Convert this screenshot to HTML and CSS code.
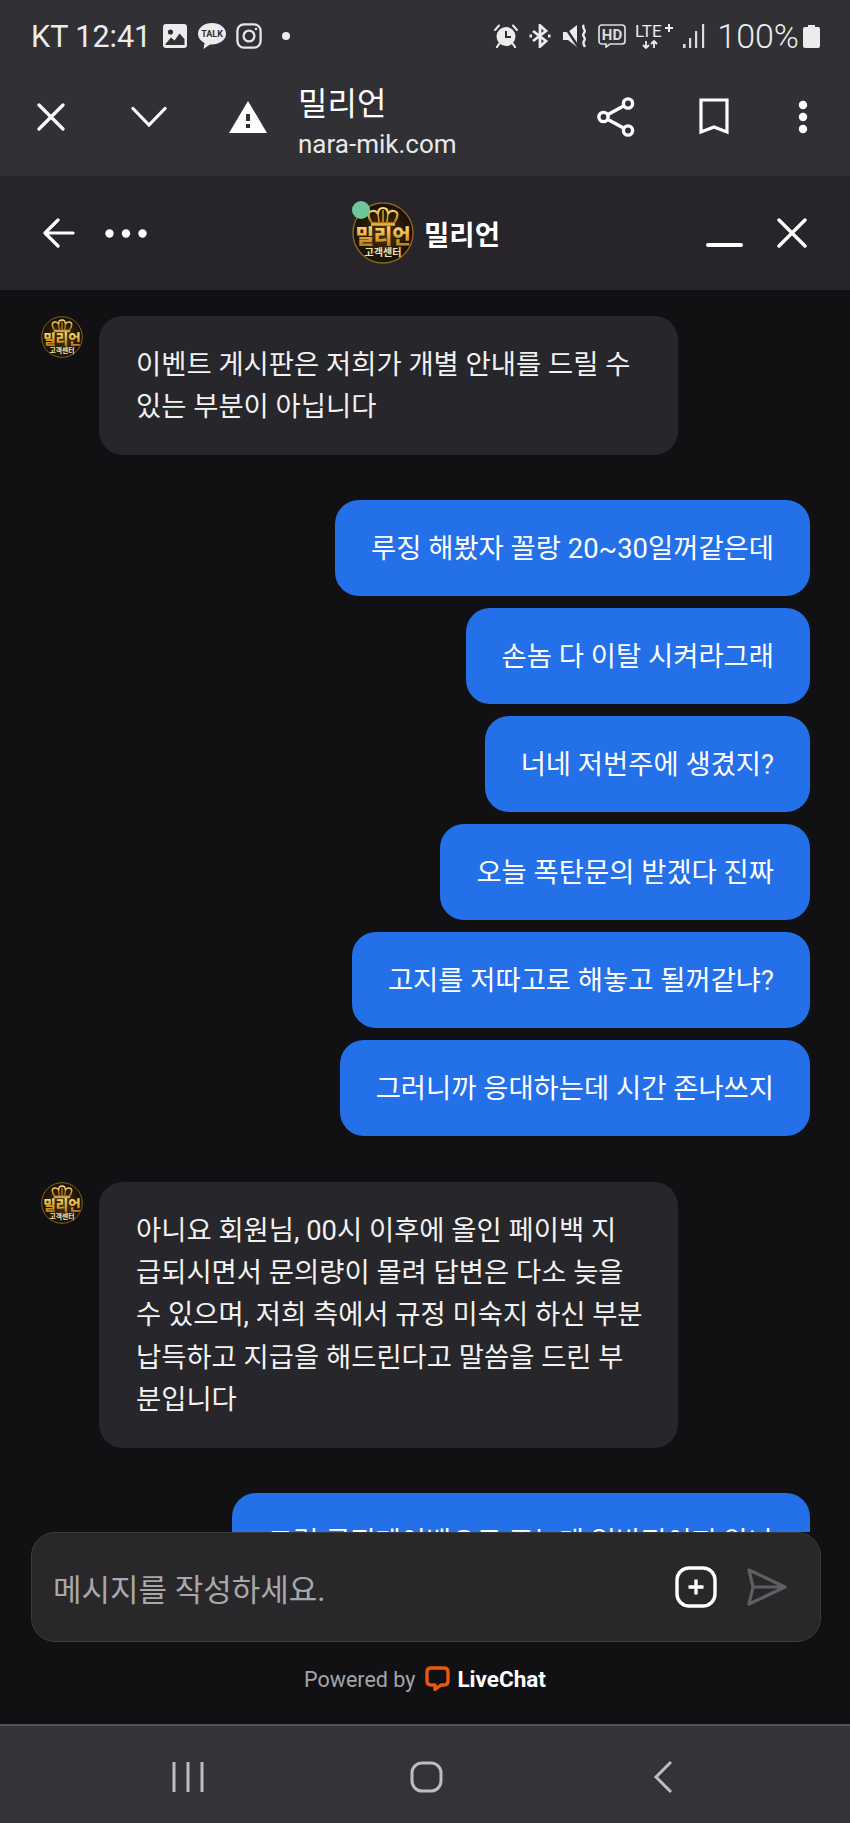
FILE: index.html
```html
<!DOCTYPE html>
<html lang="ko">
<head>
    <meta charset="UTF-8">
    <meta name="viewport" content="width=device-width, initial-scale=1.0">
    <title>밀리언</title>
    <link rel="stylesheet" href="styles.css">
</head>
<body>
    <svg class="defs" width="0" height="0">
        <defs>
            <linearGradient id="gold" x1="0" y1="0" x2="0" y2="1">
                <stop offset="0" stop-color="#fbe08a"/>
                <stop offset="0.55" stop-color="#d9a02f"/>
                <stop offset="1" stop-color="#a86f14"/>
            </linearGradient>
            <radialGradient id="disc" cx="0.5" cy="0.5" r="0.55">
                <stop offset="0" stop-color="#4a3208"/>
                <stop offset="1" stop-color="#120c04"/>
            </radialGradient>
            <symbol id="logo" viewBox="0 0 62 62">
                <circle cx="31" cy="31" r="30" fill="url(#disc)" stroke="#8a6420" stroke-width="1.4"/>
                <path d="M20 21 C16 15 15 10 20 9 C23 8.500 25 10 26 12 C26 8 28 6 31 6 C34 6 36 8 36 12 C37 10 39 8.500 42 9 C47 10 46 15 42 21 Z" fill="none" stroke="url(#gold)" stroke-width="2.2" stroke-linejoin="round"/>
                <path d="M26 12 L27 20 M31 8 V20 M36 12 L35 20" stroke="#d9a02f" stroke-width="1.5"/>
                <rect x="19" y="21.500" width="24" height="2.600" fill="url(#gold)"/>
                <text x="31" y="42" text-anchor="middle" class="logo-main" fill="url(#gold)">밀리언</text>
                <text x="31" y="54" text-anchor="middle" class="logo-sub" fill="#f4e3b4">고객센터</text>
            </symbol>
        </defs>
    </svg>

    <div class="browser">
        <div class="status-bar">
            <div class="status-left">
                <span class="clock">KT 12:41</span>
                <svg class="ic-image" viewBox="0 0 24 24"><rect width="24" height="24" rx="3" fill="#ececec"/><circle cx="7.500" cy="8" r="2.600" fill="#303035"/><path d="M2.500 20 L8 13.500 L11.500 16.500 L16.500 9.500 L21.500 15 V21 H2.500 Z" fill="#303035"/></svg>
                <svg class="ic-talk" viewBox="0 0 30 28"><path d="M15 1 C7 1 1 5.800 1 11.800 C1 15.800 3.800 19.200 7.600 21 L6.400 27 L13 22.400 C13.700 22.500 14.300 22.500 15 22.500 C23 22.500 29 17.700 29 11.800 C29 5.800 23 1 15 1 Z" fill="#ececec"/><text x="15" y="15.400" text-anchor="middle" class="talk-text">TALK</text></svg>
                <svg class="ic-insta" viewBox="0 0 26 26" fill="none" stroke="#e6e6e6" stroke-width="2.300"><rect x="1.400" y="1.400" width="23.200" height="23.200" rx="6.500"/><circle cx="13" cy="13" r="5.400"/><circle cx="20" cy="6" r="1.300" fill="#e6e6e6" stroke="none"/></svg>
                <span class="status-dot"></span>
            </div>
            <div class="status-right">
                <svg class="ic-alarm" viewBox="0 0 24 24"><path d="M1 6 L5 1.500 M23 6 L19 1.500" stroke="#ececec" stroke-width="2" stroke-linecap="round"/><path d="M5 20 L3 23 M19 20 L21 23" stroke="#ececec" stroke-width="2.200" stroke-linecap="round"/><circle cx="12" cy="12.500" r="9.500" fill="#ececec"/><path d="M12 7 V13 H17" fill="none" stroke="#303035" stroke-width="2"/></svg>
                <svg class="ic-bt" viewBox="0 0 22 24" fill="none" stroke="#ececec" stroke-width="2.800"><path d="M4 7 L17 17 L11 22.500 V1.500 L17 7 L4 17"/><path d="M0.500 12 H3 M19 12 H21.500" stroke-width="2.800"/></svg>
                <svg class="ic-mute" viewBox="0 0 24 24"><path d="M0 8 H5 L14 1 V23 L5 16 H0 Z" fill="#ececec"/><path d="M0 0 L16 24" stroke="#303035" stroke-width="2.500"/><path d="M21 1 C18 4 24 6 21 9 C18 12 24 14 21 17 C19.500 19 21 21 22 23" fill="none" stroke="#ececec" stroke-width="2.400"/></svg>
                <svg class="ic-hd" viewBox="0 0 28 24"><path d="M4 1 H24 Q27 1 27 4 V17 Q27 20 24 20 H12 L8 23 V20 H4 Q1 20 1 17 V4 Q1 1 4 1 Z" fill="none" stroke="#dcdcdc" stroke-width="1.700"/><text x="14" y="16" text-anchor="middle" class="hd-text">HD</text></svg>
                <svg class="ic-lte" viewBox="0 -3 40 29"><text x="0" y="14" class="lte-text">LTE</text><path d="M34 1 V9 M30 5 H38" stroke="#ececec" stroke-width="2"/><path d="M11 18 V25 M8 22 L11 25 L14 22 M19 25 V18 M16 21 L19 18 L22 21" fill="none" stroke="#ececec" stroke-width="1.800"/></svg>
                <svg class="ic-signal" viewBox="0 0 22 24" fill="#dcdcdc"><rect x="0" y="20" width="2.600" height="4"/><rect x="6" y="14" width="2.200" height="10"/><rect x="12" y="7" width="2.200" height="17"/><rect x="19" y="0" width="2.200" height="24"/></svg>
                <span class="battery-text">100%</span>
                <svg class="ic-battery" viewBox="0 0 17 23"><path d="M5 0 H12 V2 H15 Q17 2 17 4 V21 Q17 23 15 23 H2 Q0 23 0 21 V4 Q0 2 2 2 H5 Z" fill="#ececec"/></svg>
            </div>
        </div>
        <div class="toolbar">
            <svg class="ic-x" viewBox="0 0 28 28"><path d="M2 2 L26 26 M26 2 L2 26" stroke="#fff" stroke-width="3.200" stroke-linecap="round"/></svg>
            <svg class="ic-chevron" viewBox="0 0 36 22"><path d="M2 2.500 L18 19 L34 2.500" fill="none" stroke="#fff" stroke-width="3.200" stroke-linecap="round"/></svg>
            <svg class="ic-warning" viewBox="0 0 38 32"><path d="M19 0 L38 32 H0 Z" fill="#fff"/><rect x="17" y="13" width="4" height="7" fill="#303035"/><rect x="17" y="23" width="4" height="4" fill="#303035"/></svg>
            <div class="page-info">
                <div class="page-title">밀리언</div>
                <div class="page-url">nara-mik.com</div>
            </div>
            <svg class="ic-share" viewBox="0 0 38 40" fill="none" stroke="#fff" stroke-width="3.400"><circle cx="6.500" cy="20" r="4.600"/><circle cx="31" cy="6.500" r="4.600"/><circle cx="31" cy="33.500" r="4.600"/><path d="M10.500 17.800 L27 8.700 M10.500 22.200 L27 31.300"/></svg>
            <svg class="ic-bookmark" viewBox="0 0 30 37"><path d="M2 2 H28 V34 L15 29 L2 34 Z" fill="none" stroke="#fff" stroke-width="3.200"/></svg>
            <svg class="ic-more" viewBox="0 0 10 34" fill="#fff"><circle cx="5" cy="5" r="4.200"/><circle cx="5" cy="17" r="4.200"/><circle cx="5" cy="29" r="4.200"/></svg>
        </div>
    </div>

    <header class="chat-header">
        <div class="header-left">
            <svg class="ic-back" viewBox="0 0 32 30"><path d="M30 15 H3 M15 2 L2 15 L15 28" fill="none" stroke="#fff" stroke-width="3.200" stroke-linecap="round" stroke-linejoin="round"/></svg>
            <svg class="ic-dots" viewBox="0 0 42 9" fill="#fff"><circle cx="4.500" cy="4.500" r="4.200"/><circle cx="21" cy="4.500" r="4.200"/><circle cx="37.500" cy="4.500" r="4.200"/></svg>
        </div>
        <div class="header-center">
            <div class="header-avatar">
                <svg class="avatar-big" viewBox="0 0 62 62"><use href="#logo"/></svg>
                <span class="online"></span>
            </div>
            <span class="header-title">밀리언</span>
        </div>
        <div class="header-right">
            <span class="minimize"></span>
            <svg class="ic-close" viewBox="0 0 30 30"><path d="M2 2 L28 28 M28 2 L2 28" stroke="#fff" stroke-width="3.400" stroke-linecap="round"/></svg>
        </div>
    </header>

    <main class="messages">
        <div class="group agent">
            <svg class="avatar" viewBox="0 0 62 62"><use href="#logo"/></svg>
            <div class="bubble">이벤트 게시판은 저희가 개별 안내를 드릴 수<br>있는 부분이 아닙니다</div>
        </div>
        <div class="group user">
            <div class="bubble">루징 해봤자 꼴랑 20~30일꺼같은데</div>
            <div class="bubble">손놈 다 이탈 시켜라그래</div>
            <div class="bubble">너네 저번주에 생겼지?</div>
            <div class="bubble">오늘 폭탄문의 받겠다 진짜</div>
            <div class="bubble">고지를 저따고로 해놓고 될꺼같냐?</div>
            <div class="bubble">그러니까 응대하는데 시간 존나쓰지</div>
        </div>
        <div class="group agent">
            <svg class="avatar" viewBox="0 0 62 62"><use href="#logo"/></svg>
            <div class="bubble">아니요 회원님, 00시 이후에 올인 페이백 지<br>급되시면서 문의량이 몰려 답변은 다소 늦을<br>수 있으며, 저희 측에서 규정 미숙지 하신 부분<br>납득하고 지급을 해드린다고 말씀을 드린 부<br>분입니다</div>
        </div>
        <div class="group user">
            <div class="bubble">그럼 루징페이백으로 주는게 일방적이지 않나</div>
        </div>
    </main>

    <div class="composer">
        <span class="placeholder">메시지를 작성하세요.</span>
        <svg class="ic-plus" viewBox="0 0 42 42"><rect x="2" y="2" width="38" height="38" rx="12" fill="none" stroke="#fff" stroke-width="3.400"/><path d="M21 13.500 V28.500 M13.500 21 H28.500" stroke="#fff" stroke-width="3.400"/></svg>
        <svg class="ic-send" viewBox="0 0 40 38"><path d="M2 2 L38 19 L2 36 L6 19 Z M6 19 H38" fill="none" stroke="#5f5f62" stroke-width="3.200" stroke-linejoin="round"/></svg>
    </div>

    <footer class="powered">
        <span class="powered-by">Powered by</span>
        <svg class="ic-livechat" viewBox="0 0 25 26"><path d="M6 2 H19 Q23 2 23 6 V15 Q23 19 19 19 H16 L10 23.500 V19 H6 Q2 19 2 15 V6 Q2 2 6 2 Z" fill="none" stroke="#e8590c" stroke-width="3.400" stroke-linejoin="round"/></svg>
        <span class="powered-name">LiveChat</span>
    </footer>

    <nav class="nav-bar">
        <svg class="ic-recent" viewBox="0 0 32 32"><path d="M2 1 V31 M16 1 V31 M30 1 V31" stroke="#bdbdc0" stroke-width="3"/></svg>
        <svg class="ic-home" viewBox="0 0 33 32"><rect x="2" y="2" width="29" height="28" rx="10" fill="none" stroke="#bdbdc0" stroke-width="3"/></svg>
        <svg class="ic-nav-back" viewBox="0 0 20 34"><path d="M18 2 L3 17 L18 32" fill="none" stroke="#bdbdc0" stroke-width="3"/></svg>
    </nav>
</body>
</html>
```

FILE: styles.css
```css
* {
    box-sizing: border-box;
}

html, body {
    margin: 0;
    padding: 0;
}

body {
    width: 850px;
    height: 1823px;
    overflow: hidden;
    display: flex;
    flex-direction: column;
    background: #111114;
    color: #fff;
    font-family: Roboto, "Noto Sans CJK KR", sans-serif;
}

svg {
    display: block;
    flex: none;
}

.defs {
    position: absolute;
}

.logo-main {
    font-size: 20px;
    font-weight: 900;
}

.logo-sub {
    font-size: 10px;
    font-weight: 700;
}

/* browser chrome */
.browser {
    height: 176px;
    flex: none;
    background: #303035;
}

.status-bar {
    height: 70px;
    padding: 2px 30px 0 31px;
    display: flex;
    justify-content: space-between;
    align-items: center;
    color: #ececec;
    font-size: 30.500px;
}

.status-left, .status-right {
    display: flex;
    align-items: center;
}

.clock {
    margin-right: 12px;
}

.ic-image { width: 24px; height: 24px; margin-right: 10px; }
.ic-talk { width: 30px; height: 28px; margin-right: 9px; }
.ic-insta { width: 26px; height: 26px; }

.talk-text {
    font-size: 9px;
    font-weight: 700;
    fill: #303035;
}

.status-dot {
    width: 8px;
    height: 8px;
    margin-left: 20px;
    border-radius: 50%;
    background: #ececec;
}

.ic-alarm { width: 24px; height: 24px; margin-right: 11px; }
.ic-bt { width: 22px; height: 24px; margin-right: 12px; }
.ic-mute { width: 24px; height: 24px; margin-right: 11px; }
.ic-hd { width: 28px; height: 24px; margin-right: 9px; }
.ic-lte { width: 40px; height: 29px; margin-top: -3px; margin-right: 8px; }
.ic-signal { width: 22px; height: 24px; margin-right: 12px; }
.ic-battery { width: 17px; height: 23px; margin-left: 4px; }

.battery-text {
    font-size: 34px;
    font-weight: 300;
}

.hd-text {
    font-size: 15px;
    font-weight: 700;
    fill: #dcdcdc;
}

.lte-text {
    font-size: 17px;
    fill: #ececec;
}

.toolbar {
    height: 106px;
    padding: 0 0 0 37px;
    display: flex;
    align-items: center;
}

.ic-x { width: 28px; height: 28px; margin-top: -13px; margin-right: 66px; }
.ic-chevron { width: 36px; height: 22px; margin-top: -13px; margin-right: 62px; }
.ic-warning { width: 38px; height: 32px; margin-top: -13px; margin-right: 31px; }
.ic-share { width: 38px; height: 40px; margin-top: -13px; margin-right: 64px; }
.ic-bookmark { width: 30px; height: 37px; margin-top: -13px; margin-right: 69px; }
.ic-more { width: 10px; height: 34px; margin-top: -13px; }

.page-info {
    width: 299px;
    margin-top: -3px;
}

.page-title {
    font-size: 32px;
    line-height: 42px;
}

.page-url {
    margin-top: 2px;
    font-size: 26px;
    line-height: 34px;
    color: #e8e8e8;
}

/* chat header */
.chat-header {
    height: 114px;
    flex: none;
    padding: 0 43px;
    display: grid;
    grid-template-columns: 1fr auto 1fr;
    align-items: center;
    background: #27252a;
}

.header-left {
    display: flex;
    align-items: center;
    gap: 30px;
}

.ic-back { width: 32px; height: 30px; }
.ic-dots { width: 42px; height: 9px; }

.header-center {
    display: flex;
    align-items: center;
    gap: 10px;
    margin-left: 2px;
}

.header-avatar {
    position: relative;
}

.avatar-big {
    width: 62px;
    height: 62px;
}

.online {
    position: absolute;
    left: 0;
    top: -1px;
    width: 18px;
    height: 18px;
    border-radius: 50%;
    background: #6cc79a;
}

.header-title {
    font-size: 27.500px;
    font-weight: 700;
}

.header-right {
    display: flex;
    align-items: center;
    justify-content: flex-end;
    gap: 34px;
}

.minimize {
    width: 37px;
    height: 4px;
    margin-top: 24px;
    border-radius: 2px;
    background: #fff;
}

.ic-close { width: 30px; height: 30px; }

/* messages */
.messages {
    height: 1242px;
    flex: none;
    overflow: hidden;
    padding: 26px 40px 0 41px;
    display: flex;
    flex-direction: column;
    gap: 45.200px;
}

.group {
    display: flex;
    flex: none;
}

.bubble {
    padding: 28px 36px 26px;
    font-size: 27.400px;
    line-height: 42.400px;
    border-radius: 24px;
    white-space: nowrap;
}

.agent {
    gap: 16px;
}

.agent .bubble {
    width: 579px;
    padding-left: 37px;
    padding-right: 0;
    background: #27262a;
    color: #f2f2f2;
}

.avatar {
    width: 42px;
    height: 42px;
}

.user {
    flex-direction: column;
    align-items: flex-end;
    gap: 11.600px;
}

.user .bubble {
    background: #2370e8;
}

/* input */
.composer {
    height: 110px;
    flex: none;
    margin: 0 29px 0 31px;
    padding: 0 33px 0 21px;
    display: flex;
    align-items: center;
    background: #28272a;
    border: 1px solid #3b3b3e;
    border-radius: 24px;
}

.placeholder {
    flex: 1;
    font-size: 31px;
    color: #a8a8ab;
}

.ic-plus { width: 42px; height: 42px; margin-right: 30px; }
.ic-send { width: 40px; height: 38px; }

.powered {
    height: 74px;
    flex: none;
    display: flex;
    align-items: center;
    justify-content: center;
}

.powered-by {
    font-size: 21.500px;
    color: #a5a5a8;
}

.ic-livechat { width: 25px; height: 26px; margin-left: 10px; margin-right: 7px; }

.powered-name {
    font-size: 22.500px;
    font-weight: 700;
}

/* android nav */
.nav-bar {
    height: 99px;
    flex: none;
    margin-top: 8px;
    padding: 4px 177px 0 172px;
    display: flex;
    justify-content: space-between;
    align-items: center;
    background: #353338;
    border-top: 2px solid #55555a;
}

.ic-recent { width: 32px; height: 32px; }
.ic-home { width: 33px; height: 32px; margin-right: 5px; }
.ic-nav-back { width: 20px; height: 34px; }
```
